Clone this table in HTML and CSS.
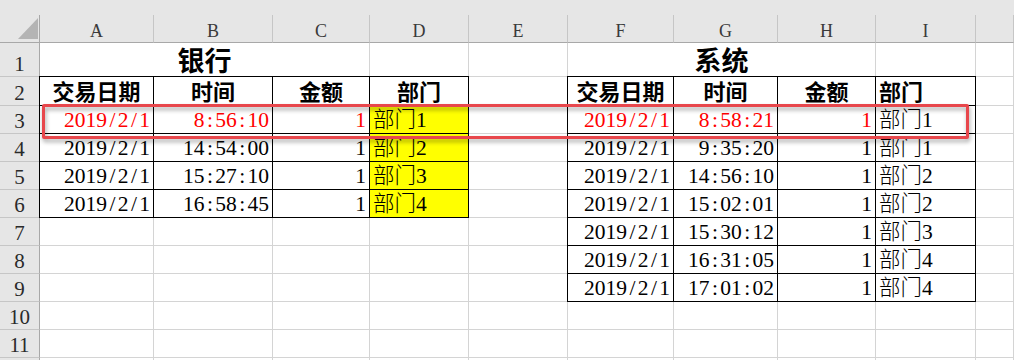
FILE: index.html
```html
<!DOCTYPE html>
<html lang="zh-CN">
<head>
<meta charset="utf-8">
<title>银行 / 系统 对账</title>
<link rel="stylesheet" href="styles.css">
</head>
<body>
<div class="page">
  <div class="topbar"></div>
  <div class="sheet">
    <!-- column headers -->
    <div class="corner"><span class="tri"></span></div>
    <div class="ch">A</div><div class="ch">B</div><div class="ch">C</div><div class="ch">D</div><div class="ch">E</div><div class="ch">F</div><div class="ch">G</div><div class="ch">H</div><div class="ch">I</div><div class="ch"></div>

    <!-- row 1 -->
    <div class="rh">1</div>
    <div class="c title span3">银行</div><div></div><div></div>
    <div class="c title span3">系统</div><div></div><div></div>

    <!-- row 2 -->
    <div class="rh">2</div>
    <div class="t c hd">交易日期</div><div class="t c hd">时间</div><div class="t c hd">金额</div><div class="t c hd">部门</div>
    <div></div>
    <div class="t c hd">交易日期</div><div class="t c hd">时间</div><div class="t c hd">金额</div><div class="t l hd">部门</div>
    <div></div>

    <!-- row 3 -->
    <div class="rh">3</div>
    <div class="t r red">2019<span class="sep">/</span>2<span class="sep">/</span>1</div>
    <div class="t r red">8<span class="sep">:</span>56<span class="sep">:</span>10</div>
    <div class="t r red">1</div>
    <div class="t l yel">部门1</div>
    <div></div>
    <div class="t r red">2019<span class="sep">/</span>2<span class="sep">/</span>1</div>
    <div class="t r red">8<span class="sep">:</span>58<span class="sep">:</span>21</div>
    <div class="t r red">1</div>
    <div class="t l">部门1</div>
    <div></div>

    <!-- row 4 -->
    <div class="rh">4</div>
    <div class="t r">2019<span class="sep">/</span>2<span class="sep">/</span>1</div>
    <div class="t r">14<span class="sep">:</span>54<span class="sep">:</span>00</div>
    <div class="t r">1</div>
    <div class="t l yel">部门2</div>
    <div></div>
    <div class="t r">2019<span class="sep">/</span>2<span class="sep">/</span>1</div>
    <div class="t r">9<span class="sep">:</span>35<span class="sep">:</span>20</div>
    <div class="t r">1</div>
    <div class="t l">部门1</div>
    <div></div>

    <!-- row 5 -->
    <div class="rh">5</div>
    <div class="t r">2019<span class="sep">/</span>2<span class="sep">/</span>1</div>
    <div class="t r">15<span class="sep">:</span>27<span class="sep">:</span>10</div>
    <div class="t r">1</div>
    <div class="t l yel">部门3</div>
    <div></div>
    <div class="t r">2019<span class="sep">/</span>2<span class="sep">/</span>1</div>
    <div class="t r">14<span class="sep">:</span>56<span class="sep">:</span>10</div>
    <div class="t r">1</div>
    <div class="t l">部门2</div>
    <div></div>

    <!-- row 6 -->
    <div class="rh">6</div>
    <div class="t r">2019<span class="sep">/</span>2<span class="sep">/</span>1</div>
    <div class="t r">16<span class="sep">:</span>58<span class="sep">:</span>45</div>
    <div class="t r">1</div>
    <div class="t l yel">部门4</div>
    <div></div>
    <div class="t r">2019<span class="sep">/</span>2<span class="sep">/</span>1</div>
    <div class="t r">15<span class="sep">:</span>02<span class="sep">:</span>01</div>
    <div class="t r">1</div>
    <div class="t l">部门2</div>
    <div></div>

    <!-- row 7 -->
    <div class="rh">7</div>
    <div></div><div></div><div></div><div></div><div></div>
    <div class="t r">2019<span class="sep">/</span>2<span class="sep">/</span>1</div>
    <div class="t r">15<span class="sep">:</span>30<span class="sep">:</span>12</div>
    <div class="t r">1</div>
    <div class="t l">部门3</div>
    <div></div>

    <!-- row 8 -->
    <div class="rh">8</div>
    <div></div><div></div><div></div><div></div><div></div>
    <div class="t r">2019<span class="sep">/</span>2<span class="sep">/</span>1</div>
    <div class="t r">16<span class="sep">:</span>31<span class="sep">:</span>05</div>
    <div class="t r">1</div>
    <div class="t l">部门4</div>
    <div></div>

    <!-- row 9 -->
    <div class="rh">9</div>
    <div></div><div></div><div></div><div></div><div></div>
    <div class="t r">2019<span class="sep">/</span>2<span class="sep">/</span>1</div>
    <div class="t r">17<span class="sep">:</span>01<span class="sep">:</span>02</div>
    <div class="t r">1</div>
    <div class="t l">部门4</div>
    <div></div>

    <!-- row 10 -->
    <div class="rh">10</div>
    <div></div><div></div><div></div><div></div><div></div><div></div><div></div><div></div><div></div><div></div>

    <!-- row 11 -->
    <div class="rh">11</div>
    <div></div><div></div><div></div><div></div><div></div><div></div><div></div><div></div><div></div><div></div>

    <!-- row 12 (only its top edge is visible) -->
    <div class="rh"></div>
    <div></div><div></div><div></div><div></div><div></div><div></div><div></div><div></div><div></div><div></div>
  </div>
  <div class="highlight"></div>
</div>
</body>
</html>
```

FILE: styles.css
```css
html, body {
  margin: 0;
  padding: 0;
  background: #ffffff;
  overflow: hidden;
}

body {
  font-family: "Liberation Serif", "Noto Sans CJK SC", serif;
  color: #000;
}

.page {
  position: relative;
  width: 1014px;
  height: 360px;
  overflow: hidden;
}

.topbar {
  height: 15px;
  background: #e6e6e6;
}

.sheet {
  display: grid;
  grid-template-columns: 40px 114px 119px 97px 99px 99px 106px 104px 98px 100px 1fr;
  grid-template-rows: 28px 34px 29px repeat(10, 28px);
}

.sheet > div {
  box-sizing: border-box;
  border-right: 1px solid #d4d4d4;
  border-bottom: 1px solid #d4d4d4;
  display: flex;
  align-items: flex-end;
  font-size: 21.5px;
  font-weight: 300;
  line-height: 1;
  padding: 0 3px 1.5px 3px;
  white-space: nowrap;
  min-width: 0;
}

/* column header row */
.sheet > .corner {
  background: #e6e6e6;
  border-right: 1px solid #a8a8a8;
  border-bottom: 1px solid #a8a8a8;
  justify-content: flex-end;
  padding: 0 1px 3px 0;
}

.tri {
  width: 0;
  height: 0;
  border-left: 20px solid transparent;
  border-bottom: 21px solid #b4b4b4;
}

.sheet > .ch {
  background: #e6e6e6;
  border-right: 1px solid #c6c6c6;
  border-bottom: 1px solid #a8a8a8;
  justify-content: center;
  font-size: 18px;
  font-weight: 400;
  color: #3a3a3a;
  padding-bottom: 2px;
}

/* row headers */
.sheet > .rh {
  background: #e6e6e6;
  border-right: 1px solid #a8a8a8;
  border-bottom: 1px solid #c6c6c6;
  justify-content: center;
  font-size: 21px;
  font-weight: 400;
  color: #2a2a2a;
  padding: 0 0 1.5px 0;
}

.span3 {
  grid-column: span 3;
}

.sheet > .title {
  font-size: 27px;
  font-weight: 700;
  padding-bottom: 0.5px;
}

.sheet > .hd {
  font-size: 22px;
  font-weight: 700;
}

.sheet > .c { justify-content: center; }
.sheet > .r { justify-content: flex-end; }
.sheet > .l { justify-content: flex-start; padding-left: 3px; }

.sheet > .t {
  border-right-color: #000;
  border-bottom-color: #000;
  box-shadow: -1px 0 0 #000, 0 -1px 0 #000, -1px -1px 0 #000;
}

.red {
  color: #ff0000;
}

.yel {
  background: #ffff00;
}

.sep {
  display: inline-block;
  width: 0.5em;
  text-align: center;
}

.highlight {
  position: absolute;
  left: 42px;
  top: 104px;
  width: 927px;
  height: 35px;
  box-sizing: border-box;
  border: 3px solid #e8474c;
  border-radius: 2px;
  filter: drop-shadow(1px 3px 2px rgba(0, 0, 0, 0.35));
}
```
